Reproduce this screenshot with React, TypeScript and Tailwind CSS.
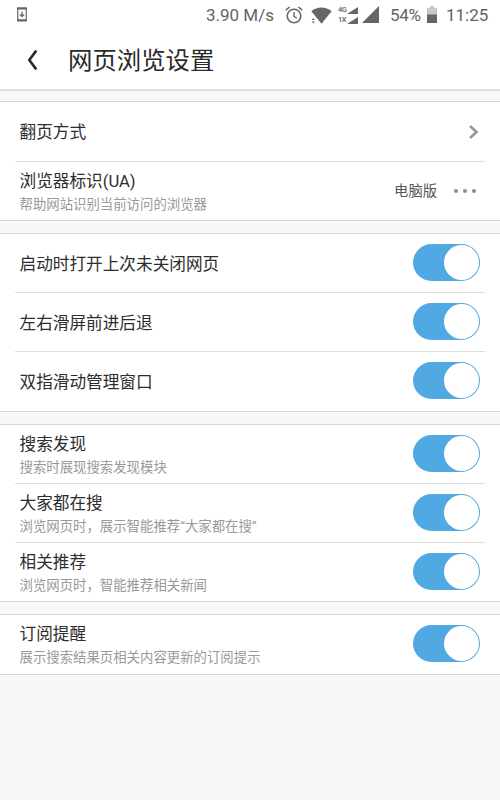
import React, { useState } from 'react';
import clsx from 'clsx';

type SettingItem = {
  id: string;
  title: string;
  description?: string;
  kind: 'link' | 'select' | 'switch';
  value?: string;
  height: string;
};

const sections: SettingItem[][] = [
  [
    { id: 'paging', title: '翻页方式', kind: 'link', height: 'h-[59px]' },
    {
      id: 'ua',
      title: '浏览器标识(UA)',
      description: '帮助网站识别当前访问的浏览器',
      kind: 'select',
      value: '电脑版',
      height: 'h-[58px]',
    },
  ],
  [
    { id: 'restore', title: '启动时打开上次未关闭网页', kind: 'switch', height: 'h-[58px]' },
    { id: 'swipe', title: '左右滑屏前进后退', kind: 'switch', height: 'h-[58px]' },
    { id: 'twoFinger', title: '双指滑动管理窗口', kind: 'switch', height: 'h-[59px]' },
  ],
  [
    {
      id: 'discover',
      title: '搜索发现',
      description: '搜索时展现搜索发现模块',
      kind: 'switch',
      height: 'h-[58px]',
    },
    {
      id: 'everyone',
      title: '大家都在搜',
      description: '浏览网页时，展示智能推荐“大家都在搜”',
      kind: 'switch',
      height: 'h-[58px]',
    },
    {
      id: 'related',
      title: '相关推荐',
      description: '浏览网页时，智能推荐相关新闻',
      kind: 'switch',
      height: 'h-[58px]',
    },
  ],
  [
    {
      id: 'subscribe',
      title: '订阅提醒',
      description: '展示搜索结果页相关内容更新的订阅提示',
      kind: 'switch',
      height: 'h-[59px]',
    },
  ],
];

const StatusBar: React.FC = () => (
  <div className="flex h-[31px] items-center pl-[17px] pr-[10px] text-[17px] leading-none text-[#636363]">
    <svg className="-mt-0.5" width="10" height="15" viewBox="0 0 10 15" fill="none" stroke="#666">
      <path d="M.75 1v13M9.25 1v13" strokeWidth="1.2" />
      <path d="M.2 1.4h9.6M.2 13.4h9.6" strokeWidth="2.2" />
      <path d="M5 4.5v5M3 7.5l2 2 2-2" strokeWidth="1.3" />
    </svg>
    <span className="ml-auto w-[69px] whitespace-nowrap">3.90 M/s</span>
    {/* alarm */}
    <svg className="-mt-0.5 ml-[10px]" width="18" height="18" viewBox="0 0 18 18" fill="none" stroke="#666">
      <circle cx="9" cy="10" r="6.8" strokeWidth="1.6" />
      <path d="M9 6v4.3l2.8 1.8" strokeWidth="1.3" />
      <path d="M.8 4.1 4.6 1M17.2 4.1 13.4 1" strokeWidth="1.5" />
    </svg>
    {/* wifi */}
    <svg className="ml-[8px]" width="21" height="17" viewBox="0 0 21 17" fill="#666">
      <path d="M.3 4.2C6.3-.6 14.3-.6 20.7 4.2L10.5 16.8Z" />
      <path d="M0 10h5v7H0z" fill="#fff" />
      <path d="m2.3 11 1.6 2H.7zM2.3 16.5l1.6-2H.7z" />
    </svg>
    {/* dual sim signal */}
    <div className="-mt-0.5 ml-[6px] flex h-[18px] flex-col justify-between">
      {['4G', '1X'].map((label) => (
        <div key={label} className="flex h-2 items-end">
          <span className="w-[9px] text-[7.5px] font-medium leading-[8px] tracking-[-0.5px]">{label}</span>
          <svg width="11" height="7" viewBox="0 0 11 7" fill="#666">
            <path d="M0 7 11 0v7z" />
          </svg>
        </div>
      ))}
    </div>
    <svg className="-mt-0.5 ml-[4px]" width="17" height="17" viewBox="0 0 17 17" fill="#666">
      <path d="M0 17 17 0v17z" />
    </svg>
    <span className="ml-[11px] w-[32px] whitespace-nowrap tracking-[-0.3px]">54%</span>
    {/* battery */}
    <svg className="-mt-0.5 ml-[5px]" width="10" height="17" viewBox="0 0 10 17">
      <path d="M0 2h3V0h4v2h3v7H0z" fill="#c8c8c8" />
      <path d="M0 8.5h10V17H0z" fill="#666" />
    </svg>
    <span className="ml-[9px] w-[44px] whitespace-nowrap">11:25</span>
  </div>
);

const Header: React.FC = () => (
  <header className="flex h-[58px] items-center pl-[27px]">
    <svg className="-mt-px" width="12" height="22" viewBox="0 0 12 22" fill="none" stroke="#2c2c2c" strokeWidth="2.6">
      <path d="M9.3 1.6 2.3 11l7 9.4" />
    </svg>
    <h1 className="ml-[29px] pt-[2px] text-[24.4px] leading-none text-[#2a2a2a]">网页浏览设置</h1>
  </header>
);

interface ToggleProps {
  checked: boolean;
  label: string;
  onChange: () => void;
}

const Toggle: React.FC<ToggleProps> = ({ checked, label, onChange }) => (
  <button
    type="button"
    role="switch"
    aria-checked={checked}
    aria-label={label}
    onClick={onChange}
    className={clsx(
      '-mt-0.5 flex h-[37px] w-[67px] items-center rounded-full px-[1.5px] py-px',
      checked ? 'justify-end bg-[#50a9e3]' : 'justify-start bg-gray-300'
    )}
  >
    <span className="size-[35px] rounded-full bg-white" />
  </button>
);

const App: React.FC = () => {
  const [disabled, setDisabled] = useState<Record<string, boolean>>({});

  const handleToggle = (id: string) => {
    setDisabled((prev) => ({ ...prev, [id]: !prev[id] }));
  };

  return (
    <div className="min-h-screen w-full bg-[#f8f8f8] font-[Roboto,'Noto_Sans_CJK_SC',sans-serif]">
      <div className="border-b-2 border-[#e0e0e0] bg-white">
        <StatusBar />
        <Header />
      </div>

      <main className="flex flex-col gap-3 pt-[10px]">
        {sections.map((items, index) => (
          <section key={index} className="border-y border-[#d7d7d7] bg-white">
            {items.map((item, i) => (
              <React.Fragment key={item.id}>
                {i > 0 && <div className="mx-[15px] h-px bg-[#dedede]" />}
                <div className={clsx('flex items-center justify-between pl-[19.5px] pr-[20px]', item.height)}>
                  <div className={item.description ? 'pt-[3px]' : 'pt-[3px]'}>
                    <div className="text-[16.65px] leading-[24px] text-[#2d2d2d]">{item.title}</div>
                    {item.description && (
                      <div className="text-[13.4px] leading-[22px] text-[#999]">{item.description}</div>
                    )}
                  </div>

                  {item.kind === 'link' && (
                    <svg width="12" height="16" viewBox="0 0 12 16" fill="none" stroke="#999" strokeWidth="2.7">
                      <path d="m2 2 6.5 6L2 14" />
                    </svg>
                  )}
                  {item.kind === 'select' && (
                    <div className="flex items-center gap-[17px] pr-[4px]">
                      <span className="text-[14.3px] leading-5 text-[#555]">{item.value}</span>
                      <span className="flex gap-[5px]">
                        <i className="size-1 rounded-full bg-[#8c8c8c]" />
                        <i className="size-1 rounded-full bg-[#8c8c8c]" />
                        <i className="size-1 rounded-full bg-[#8c8c8c]" />
                      </span>
                    </div>
                  )}
                  {item.kind === 'switch' && (
                    <Toggle
                      checked={!disabled[item.id]}
                      label={item.title}
                      onChange={() => handleToggle(item.id)}
                    />
                  )}
                </div>
              </React.Fragment>
            ))}
          </section>
        ))}
      </main>
    </div>
  );
};

export default App;
